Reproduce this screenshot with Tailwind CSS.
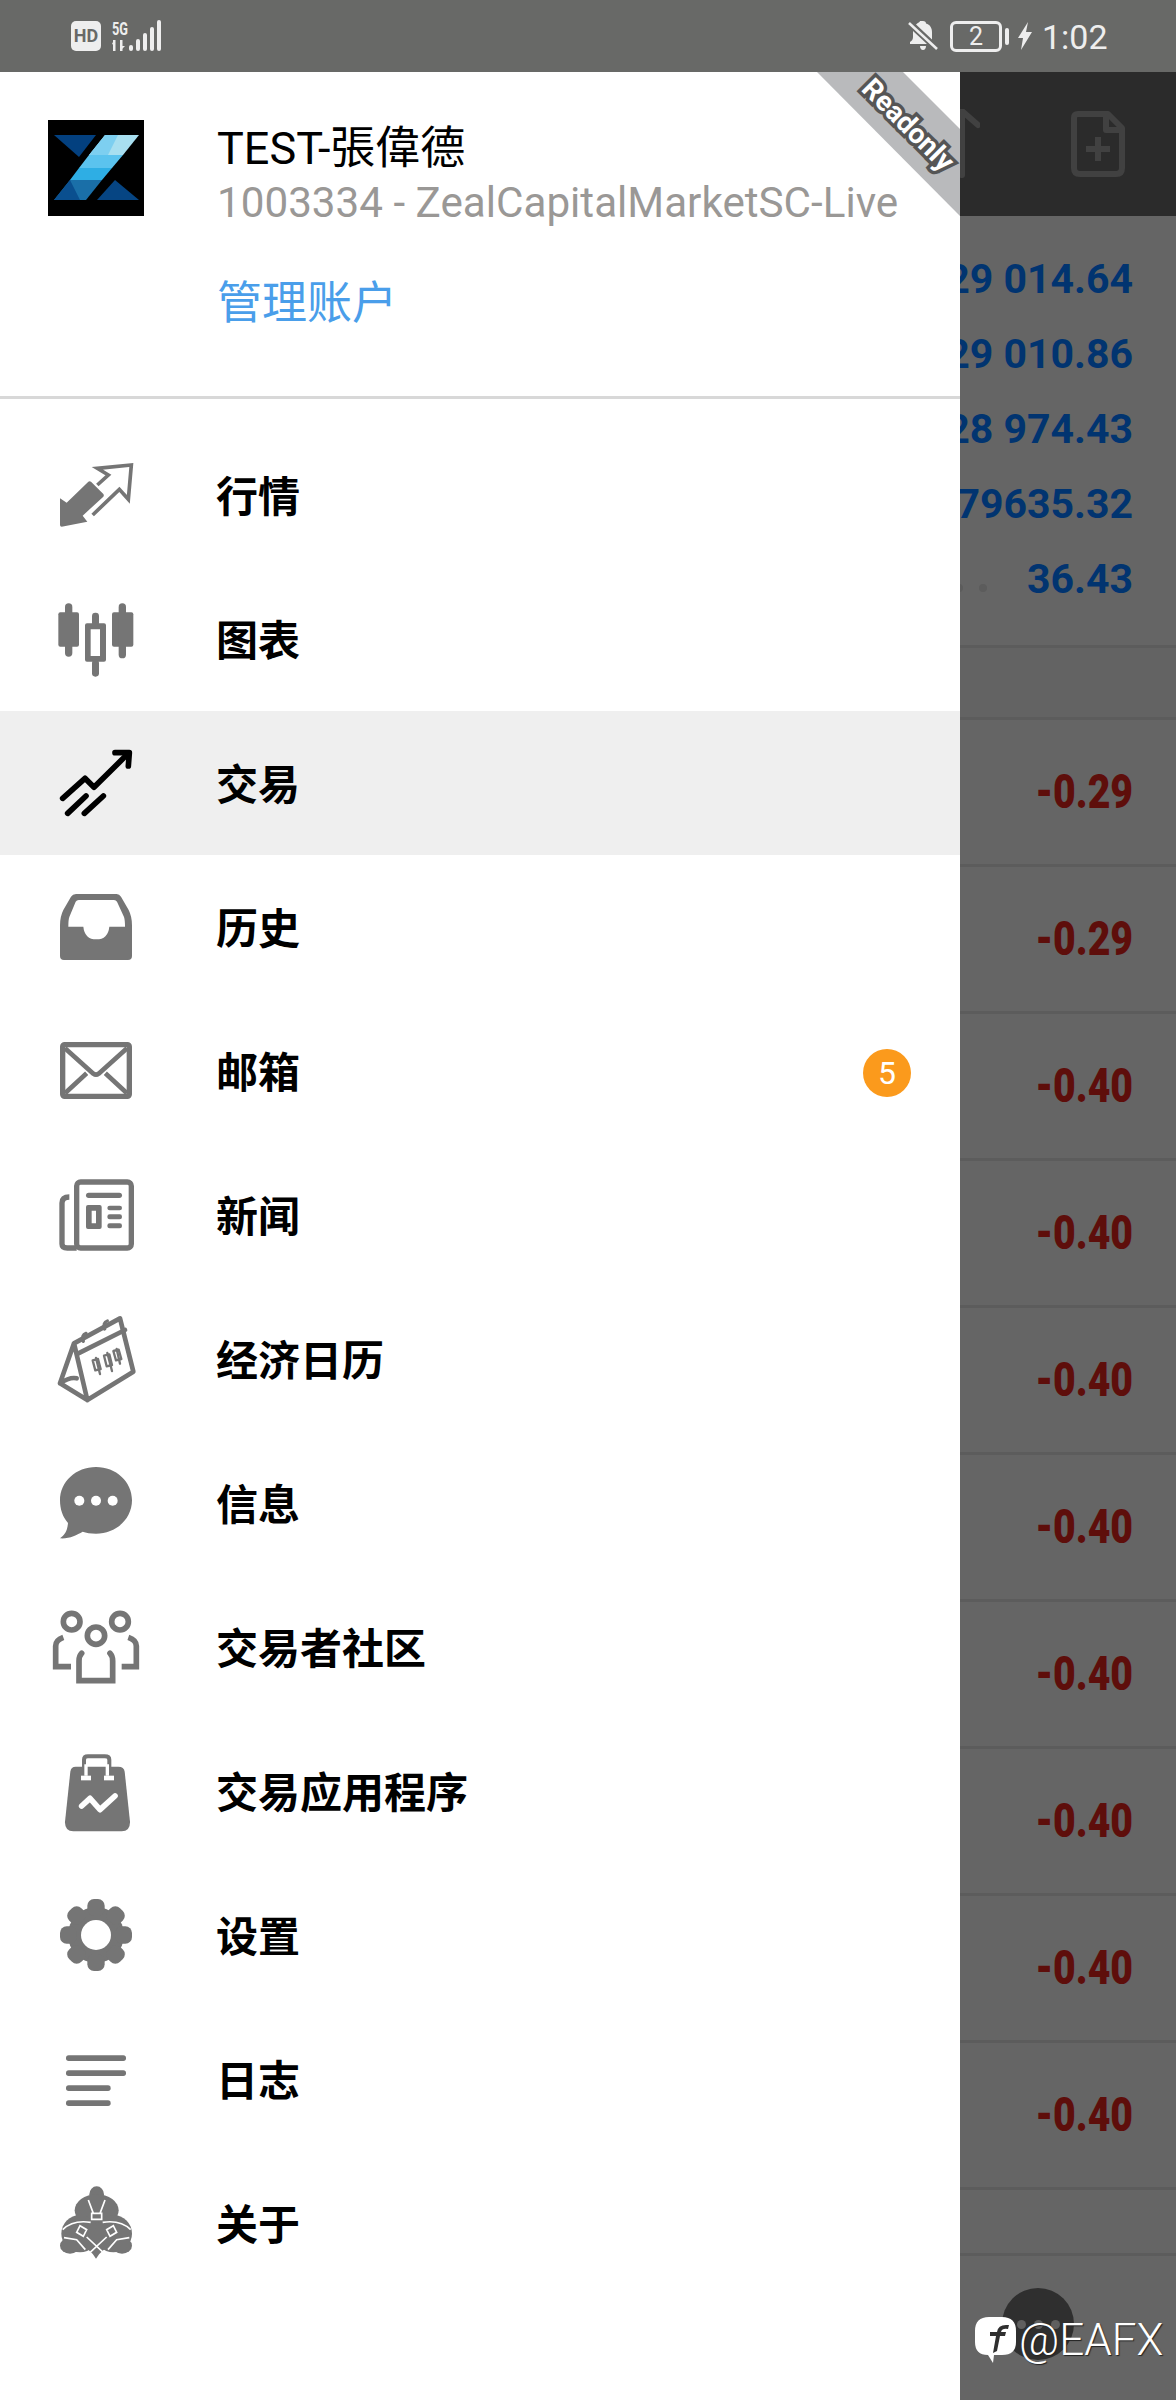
<!DOCTYPE html>
<html lang="zh-CN">
  <head>
    <meta charset="UTF-8" />
    <meta name="viewport" content="width=device-width, initial-scale=1.0" />
    <script src="https://cdn.jsdelivr.net/npm/@tailwindcss/browser@4"></script>
    <title>MetaTrader</title>
  </head>
  <body class="bg-[#656565] [font-family:Roboto,'Noto_Sans_CJK_SC',sans-serif]">
    <div class="relative w-[1176px] h-[2400px] overflow-hidden flex flex-col">
      <!-- status bar -->
      <div class="h-[72px] shrink-0 bg-[#686967] flex items-center justify-between pl-[71px] pr-[73px] text-[#eeeeee]">
        <div class="flex items-center gap-[11px]">
          <div class="w-[30px] h-[30px] rounded-[5px] bg-[#eeeeee] text-[#686967] text-[18px] font-bold leading-[30px] text-center">HD</div>
          <svg class="w-[50px] h-[32px]" viewBox="0 0 50 32" fill="#eeeeee">
            <text x="0" y="15" font-size="19" font-weight="700" font-family="Roboto" textLength="16" lengthAdjust="spacingAndGlyphs">5G</text>
            <rect x="1" y="20" width="2.500" height="11" />
            <rect x="8" y="20" width="2.500" height="11" />
            <path d="M0 24l2-4v5zM8 31l5-5H8z" />
            <rect x="17" y="25" width="4" height="6" rx="2" />
            <rect x="24" y="19" width="4" height="12" rx="2" />
            <rect x="31" y="13" width="4" height="18" rx="2" />
            <rect x="38" y="7" width="4" height="24" rx="2" />
            <rect x="45" y="0" width="4" height="31" rx="2" />
          </svg>
        </div>
        <div class="flex items-center">
          <svg class="w-[30px] h-[30px] mr-[12px]" viewBox="0 0 30 30" fill="#eeeeee">
            <path d="M15 0c2 0 3 1 3 2.500 4 1 6 4.500 6 9v7l-16-15c2-2 4-2.500 4-3.500 0-0 1-0 3-0zM5 10l14 13H2v-2c2-1 3-3 3-5zM12 25h6c0 2-1 4-3 4s-3-2-3-4z" />
            <path d="M1 2l28 26" stroke="#eeeeee" stroke-width="2.500" />
          </svg>
          <div class="relative w-[52px] h-[31px] rounded-[6px] border-[3px] border-[#eeeeee] text-[25px] font-normal leading-[26px] text-center">2</div>
          <div class="w-[4px] h-[17px] rounded-[2px] bg-[#eeeeee] ml-[3px] mr-[9px]"></div>
          <svg class="w-[14px] h-[28px] mr-[10px]" viewBox="0 0 14 28" fill="#eeeeee"><path d="M10 0L0 16h5L3 28 14 10H8z" /></svg>
          <span class="text-[34px] font-normal leading-none w-[61px] whitespace-nowrap mt-[2px]">1:02</span>
        </div>
      </div>

      <div class="flex flex-1 min-h-0">
        <!-- drawer -->
        <div class="w-[960px] shrink-0 bg-white flex flex-col">
          <div class="h-[327px] shrink-0 border-b-[3px] border-[#d8d8d8] flex pl-[48px] pt-[48px] gap-[73px]">
            <svg class="w-[96px] h-[96px] shrink-0" viewBox="0 0 96 96">
              <rect width="96" height="96" fill="#000000" />
              <path d="M6 15h42L31 37z" fill="#03407f" />
              <path d="M67 60l24 20H49z" fill="#064583" />
              <path d="M57 15h34L75 35H41z" fill="#a8dff0" />
              <path d="M57 15h13L60 35H41z" fill="#7dcff0" />
              <path d="M41 35h34L64 48H31z" fill="#5bc3ee" />
              <path d="M31 48h33L54 60H22z" fill="#2eaee4" />
              <path d="M22 60h32L38 80H6z" fill="#1a6fa8" />
              <path d="M6 80l16-20 10 20z" fill="#0a4f8f" />
            </svg>
            <div class="flex flex-col">
              <div class="text-[45px] leading-[54px] mt-[2px] text-black [font-family:Roboto,'Noto_Sans_CJK_TC',sans-serif] whitespace-nowrap">TEST-張偉德</div>
              <div class="text-[42.2px] leading-[48px] mt-[3px] text-[#9a9896] whitespace-nowrap">1003334 - ZealCapitalMarketSC-Live</div>
              <div class="text-[45px] leading-[54px] mt-[50px] text-[#4a9eea]">管理账户</div>
            </div>
          </div>

          <nav class="pt-[24px] flex flex-col text-[42px] font-bold text-black leading-none">
            <div class="h-[144px] flex items-center pl-[60px] gap-[84px]">
              <svg class="w-[72px] h-[72px] shrink-0 overflow-visible" viewBox="0 0 216 216" fill="#757575">
                <path d="M0 118l20 13 65-63q4-3 8 0l37 37q3 4 0 8l-62 57 14 18-77 15q-5 0-5-5z" />
                <path d="M112 78l33-30-33-20 102-10-9 103-27-30-80 77" fill="none" stroke="#757575" stroke-width="11" />
              </svg>
              <span class="pt-[6px]">行情</span>
            </div>
            <div class="h-[144px] flex items-center pl-[60px] gap-[84px]">
              <svg class="w-[72px] h-[72px] shrink-0 overflow-visible" viewBox="0 0 216 216" fill="#757575">
                <rect x="-5" y="28" width="62" height="103" rx="6" />
                <rect x="15" y="1" width="22" height="160" rx="11" />
                <path fill-rule="evenodd" d="M81 61h51q6 0 6 6v103q0 6-6 6H81q-6 0-6-6V67q0-6 6-6zM92 79v80h28V79z" />
                <rect x="96" y="29" width="21" height="40" rx="10" />
                <rect x="96" y="170" width="21" height="51" rx="10" />
                <rect x="156" y="28" width="64" height="103" rx="6" />
                <rect x="176" y="1" width="22" height="165" rx="11" />
              </svg>
              <span class="pt-[6px]">图表</span>
            </div>
            <div class="h-[144px] flex items-center pl-[60px] gap-[84px] bg-[#efefef]">
              <svg class="w-[72px] h-[72px] shrink-0 overflow-visible" viewBox="0 0 216 216" fill="none" stroke="#000000" stroke-width="17" stroke-linecap="round" stroke-linejoin="round">
                <path d="M8 154l67-60 27 27L205 19" />
                <path d="M165 17h43l-3 40" />
                <path d="M23 199l55-52M73 199l57-52" />
              </svg>
              <span class="pt-[6px]">交易</span>
            </div>
            <div class="h-[144px] flex items-center pl-[60px] gap-[84px]">
              <svg class="w-[72px] h-[72px] shrink-0 overflow-visible" viewBox="0 0 216 216" fill="#757575">
                <path fill-rule="evenodd" d="M48 9h122q8 0 13 8l23 40q10 20 10 46v92q0 12-12 12H12q-12 0-12-12v-92q0-26 10-46l23-40q5-8 15-8zM56 27q-6 0-9 5L28 78q-3 8-3 29h45q4 38 39 38t39-38h47q0-20-3-29l-21-46q-3-5-9-5z" />
              </svg>
              <span class="pt-[6px]">历史</span>
            </div>
            <div class="h-[144px] flex items-center pl-[60px] gap-[84px]">
              <svg class="w-[72px] h-[72px] shrink-0 overflow-visible" viewBox="0 0 216 216" fill="none" stroke="#757575" stroke-linejoin="round">
                <rect x="8" y="29" width="200" height="155" rx="6" stroke-width="16" />
                <path d="M15 40l85 76q8 6 16 0l85-76M15 175l65-60M201 175l-65-60" stroke-width="14" />
              </svg>
              <span class="pt-[6px]">邮箱</span>
              <div class="w-[48px] h-[48px] ml-auto mr-[49px] mt-[4px] rounded-full bg-[#fb9a1c] text-white text-[32px] font-normal leading-[48px] text-center">5</div>
            </div>
            <div class="h-[144px] flex items-center pl-[60px] gap-[84px]">
              <svg class="w-[72px] h-[72px] shrink-0 overflow-visible" viewBox="0 0 216 216" fill="#757575">
                <rect x="50" y="9" width="164" height="198" rx="12" fill="none" stroke="#757575" stroke-width="16" />
                <path d="M28 54Q6 54 6 72v123q0 12 16 12h28" fill="none" stroke="#757575" stroke-width="16" />
                <rect x="78" y="41" width="108" height="16" rx="8" />
                <path fill-rule="evenodd" d="M84 78h35q6 0 6 6v60q0 6-6 6H84q-6 0-6-6V84q0-6 6-6zM95 95v38h13V95z" />
                <rect x="142" y="80" width="44" height="14" rx="7" />
                <rect x="142" y="106" width="44" height="15" rx="7" />
                <rect x="142" y="133" width="44" height="15" rx="7" />
              </svg>
              <span class="pt-[6px]">新闻</span>
            </div>
            <div class="h-[144px] flex items-center pl-[60px] gap-[84px]">
              <svg class="w-[72px] h-[72px] shrink-0 overflow-visible" viewBox="0 0 216 216" fill="none" stroke="#757575" stroke-width="14" stroke-linejoin="round" stroke-linecap="round">
                <path d="M42 61L180-14l40 160-138 85zM42 61L0 181l82 50M0 181q30-20 50-15" />
                <path d="M55 91L195 21" />
                <path d="M70 55q-6-20 8-24M134 18q-6-20 8-24" stroke-width="10" />
                <path d="M108 105l12 48M142 90l14 54M170 78l10 44" stroke-width="7" />
                <path d="M98 112l16-4 8 30-16 4zM132 98l16-4 8 32-16 4zM160 84l16-4 8 28-16 4z" stroke-width="7" />
              </svg>
              <span class="pt-[6px]">经济日历</span>
            </div>
            <div class="h-[144px] flex items-center pl-[60px] gap-[84px]">
              <svg class="w-[72px] h-[72px] shrink-0 overflow-visible" viewBox="0 0 216 216" fill="#757575">
                <path d="M108 0c60 0 108 44 108 100s-48 100-108 100c-16 0-30-3-40-6-18 10-40 22-68 20 14-10 22-22 24-46C8 150 0 126 0 100 0 44 48 0 108 0z" />
                <circle cx="58" cy="101" r="15" fill="#ffffff" />
                <circle cx="108" cy="101" r="15" fill="#ffffff" />
                <circle cx="158" cy="101" r="15" fill="#ffffff" />
              </svg>
              <span class="pt-[6px]">信息</span>
            </div>
            <div class="h-[144px] flex items-center pl-[60px] gap-[84px]">
              <svg class="w-[72px] h-[72px] shrink-0 overflow-visible" viewBox="0 0 216 216" fill="none" stroke="#757575" stroke-width="17" stroke-linecap="round">
                <circle cx="35" cy="32" r="25" />
                <circle cx="180" cy="32" r="25" />
                <circle cx="108" cy="74" r="26" />
                <path d="M65 127Q57 135 57 150v59h101v-59q0-15-8-23" />
                <path d="M10 79Q-13 87-13 105v62h46" stroke-linecap="butt" />
                <path d="M205 79q24 8 24 26v62h-44" stroke-linecap="butt" />
              </svg>
              <span class="pt-[6px]">交易者社区</span>
            </div>
            <div class="h-[144px] flex items-center pl-[60px] gap-[84px]">
              <svg class="w-[72px] h-[72px] shrink-0 overflow-visible" viewBox="0 0 216 216" fill="#757575">
                <path d="M47 35h128q17 0 19 15l16 150q1 29-25 29H40q-26 0-25-29l16-150q2-15 16-15z" />
                <path d="M72 40V14Q72 4 84 4h50q14 0 14 10v26" fill="none" stroke="#757575" stroke-width="12" />
                <path d="M78 28v34M142 28v34" stroke="#ffffff" stroke-width="10" />
                <rect x="63" y="62" width="30" height="14" fill="#ffffff" />
                <rect x="132" y="62" width="30" height="14" fill="#ffffff" />
                <path d="M65 153l25-23 30 34 45-41" fill="none" stroke="#ffffff" stroke-width="17" stroke-linecap="round" stroke-linejoin="round" />
              </svg>
              <span class="pt-[6px]">交易应用程序</span>
            </div>
            <div class="h-[144px] flex items-center pl-[60px] gap-[84px]">
              <svg class="w-[72px] h-[72px] shrink-0 overflow-visible" viewBox="0 0 216 216" fill="#757575">
                <circle cx="108" cy="108" r="84" />
                <g>
                  <rect x="82" y="0" width="52" height="50" rx="20" />
                  <rect x="82" y="166" width="52" height="50" rx="20" />
                  <rect x="0" y="82" width="50" height="52" rx="20" />
                  <rect x="166" y="82" width="50" height="52" rx="20" />
                  <rect x="82" y="0" width="52" height="50" rx="20" transform="rotate(45 108 108)" />
                  <rect x="82" y="166" width="52" height="50" rx="20" transform="rotate(45 108 108)" />
                  <rect x="0" y="82" width="50" height="52" rx="20" transform="rotate(45 108 108)" />
                  <rect x="166" y="82" width="50" height="52" rx="20" transform="rotate(45 108 108)" />
                </g>
                <circle cx="108" cy="108" r="45" fill="#ffffff" />
              </svg>
              <span class="pt-[6px]">设置</span>
            </div>
            <div class="h-[144px] flex items-center pl-[60px] gap-[84px]">
              <svg class="w-[72px] h-[72px] shrink-0 overflow-visible" viewBox="0 0 216 216" fill="#757575">
                <rect x="18" y="37" width="180" height="17" rx="8" />
                <rect x="18" y="82" width="180" height="17" rx="8" />
                <rect x="18" y="127" width="134" height="17" rx="8" />
                <rect x="18" y="172" width="134" height="17" rx="8" />
              </svg>
              <span class="pt-[6px]">日志</span>
            </div>
            <div class="h-[144px] flex items-center pl-[60px] gap-[84px]">
              <svg class="w-[72px] h-[72px] shrink-0 overflow-visible" viewBox="0 0 216 216" fill="#757575">
                <ellipse cx="110" cy="22" rx="22" ry="24" />
                <ellipse cx="110" cy="70" rx="66" ry="48" />
                <circle cx="60" cy="140" r="56" />
                <circle cx="160" cy="140" r="56" />
                <ellipse cx="30" cy="176" rx="30" ry="24" />
                <ellipse cx="186" cy="176" rx="30" ry="24" />
                <path d="M60 175q30 10 48 40 18-30 50-40l-30-30h-40z" />
                <g fill="none" stroke="#ffffff" stroke-width="5">
                  <path d="M85 39l15 40M135 39l-15 40M95 79h30v18H95z" />
                  <path d="M8 128q30-30 84-22M212 128q-30-30-84-22" />
                  <path d="M60 116l20 12-10 20-20-12zM160 116l-20 12 10 20 20-12z" />
                  <path d="M12 152l38 6 26 30M208 152l-38 6-26 30M80 150l60 56M140 150l-60 56" />
                </g>
              </svg>
              <span class="pt-[6px]">关于</span>
            </div>
          </nav>
        </div>

        <!-- dimmed trade list behind the drawer -->
        <div class="flex-1 min-w-0 flex flex-col bg-[#656565] overflow-hidden">
          <div class="h-[144px] shrink-0 bg-[#2b2b2b] flex items-center justify-between pr-[51px]">
            <svg class="w-[20px] h-[70px]" viewBox="0 0 20 70" fill="none" stroke="#414141" stroke-width="6" stroke-linecap="round"><path d="M2 2l16 14M2 4v62" /></svg>
            <svg class="w-[54px] h-[66px]" viewBox="0 0 54 66" fill="none" stroke="#414141" stroke-width="6"><path d="M7 3h30l14 14v40q0 6-6 6H9q-6 0-6-6V7q0-4 4-4zM35 3v16h16" stroke-linejoin="round" /><path d="M27 26v24M15 38h24" /></svg>
          </div>
          <div class="pt-[26px] h-[429px] shrink-0 text-[41px] font-bold text-[#013470] leading-[75px] text-right pr-[43px] whitespace-nowrap flex flex-col items-end">
            <div>129 014.64</div>
            <div>129 010.86</div>
            <div>128 974.43</div>
            <div>179635.32</div>
            <div class="flex items-center">
              <span class="w-[8px] h-[8px] rounded-full bg-[#5c5c5c] mr-[16px] mt-[16px]"></span>
              <span class="w-[8px] h-[8px] rounded-full bg-[#5c5c5c] mr-[40px] mt-[16px]"></span>
              <span>36.43</span>
            </div>
          </div>
          <div class="h-[75px] shrink-0 border-y-[3px] border-[#5c5c5c] bg-[#636363]"></div>
          <div class="flex flex-col text-[49px] font-black text-[#5e0e0b]">
            <div class="h-[147px] border-b-[3px] border-[#5c5c5c] flex items-center justify-end pr-[43px]"><span class="origin-right scale-x-[0.8]">-0.29</span></div>
            <div class="h-[147px] border-b-[3px] border-[#5c5c5c] flex items-center justify-end pr-[43px]"><span class="origin-right scale-x-[0.8]">-0.29</span></div>
            <div class="h-[147px] border-b-[3px] border-[#5c5c5c] flex items-center justify-end pr-[43px]"><span class="origin-right scale-x-[0.8]">-0.40</span></div>
            <div class="h-[147px] border-b-[3px] border-[#5c5c5c] flex items-center justify-end pr-[43px]"><span class="origin-right scale-x-[0.8]">-0.40</span></div>
            <div class="h-[147px] border-b-[3px] border-[#5c5c5c] flex items-center justify-end pr-[43px]"><span class="origin-right scale-x-[0.8]">-0.40</span></div>
            <div class="h-[147px] border-b-[3px] border-[#5c5c5c] flex items-center justify-end pr-[43px]"><span class="origin-right scale-x-[0.8]">-0.40</span></div>
            <div class="h-[147px] border-b-[3px] border-[#5c5c5c] flex items-center justify-end pr-[43px]"><span class="origin-right scale-x-[0.8]">-0.40</span></div>
            <div class="h-[147px] border-b-[3px] border-[#5c5c5c] flex items-center justify-end pr-[43px]"><span class="origin-right scale-x-[0.8]">-0.40</span></div>
            <div class="h-[147px] border-b-[3px] border-[#5c5c5c] flex items-center justify-end pr-[43px]"><span class="origin-right scale-x-[0.8]">-0.40</span></div>
            <div class="h-[147px] border-b-[3px] border-[#5c5c5c] flex items-center justify-end pr-[43px]"><span class="origin-right scale-x-[0.8]">-0.40</span></div>
            <div class="h-[66px] border-b-[3px] border-[#5c5c5c]"></div>
          </div>
        </div>
      </div>

      <!-- readonly ribbon -->
      <svg class="absolute left-[817px] top-[72px] w-[143px] h-[144px]" viewBox="0 0 143 144"><path d="M0 0h86l57 57v87z" fill="#b9babc" /></svg>
      <div class="absolute left-[838px] top-[108px] w-[140px] h-[34px] rotate-[45deg] text-center text-white text-[28px] font-bold leading-[34px] [-webkit-text-stroke:7px_#555555] [paint-order:stroke_fill]">Readonly</div>

      <!-- chat button and watermark -->
      <div class="absolute left-[1002px] top-[2288px] w-[72px] h-[72px] rounded-full bg-[#2f2f2f] flex items-center justify-center gap-[8px]">
        <span class="w-[9px] h-[9px] rounded-full bg-[#5f5f5f]"></span>
        <span class="w-[9px] h-[9px] rounded-full bg-[#5f5f5f]"></span>
        <span class="w-[9px] h-[9px] rounded-full bg-[#5f5f5f]"></span>
      </div>
      <svg class="absolute left-[975px] top-[2317px] w-[41px] h-[46px]" viewBox="0 0 41 46">
        <path d="M14 0h13q14 0 14 14v11q0 13-14 13h-8l-1 8-5-8Q0 38 0 25V14Q0 0 14 0z" fill="#ffffff" />
        <path d="M18 36l3-17h-6v-4h7q1-7 9-7h3l-1 4q-6-1-7 3h5l-1 4h-5l-3 15z" fill="#2f2f2f" />
      </svg>
      <div class="absolute left-[1019px] top-[2312px] text-[44px] font-light leading-[56px] text-white [text-shadow:1px_1px_1px_#222222]">@EAFX</div>
    </div>
  </body>
</html>
